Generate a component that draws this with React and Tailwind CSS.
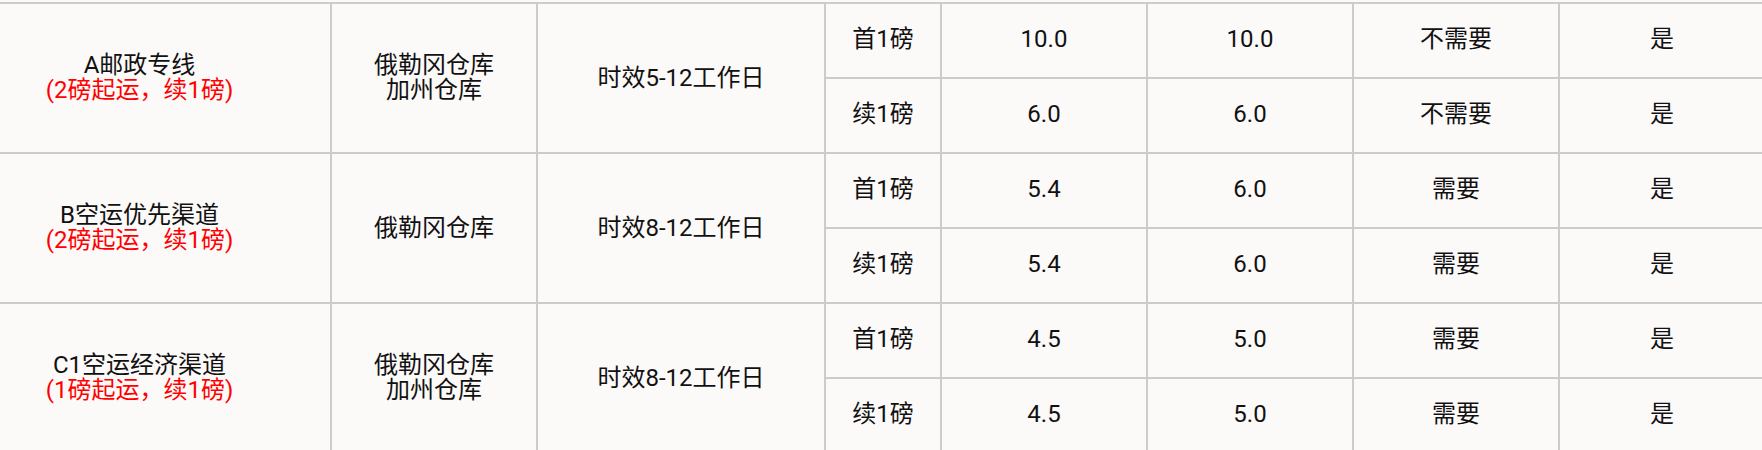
const GROUPS = [
  {
    name: "A邮政专线",
    note: "(2磅起运，续1磅)",
    store: ["俄勒冈仓库", "加州仓库"],
    time: "时效5-12工作日",
    rows: [
      ["首1磅", "10.0", "10.0", "不需要", "是"],
      ["续1磅", "6.0", "6.0", "不需要", "是"],
    ],
  },
  {
    name: "B空运优先渠道",
    note: "(2磅起运，续1磅)",
    store: ["俄勒冈仓库"],
    time: "时效8-12工作日",
    rows: [
      ["首1磅", "5.4", "6.0", "需要", "是"],
      ["续1磅", "5.4", "6.0", "需要", "是"],
    ],
  },
  {
    name: "C1空运经济渠道",
    note: "(1磅起运，续1磅)",
    store: ["俄勒冈仓库", "加州仓库"],
    time: "时效8-12工作日",
    rows: [
      ["首1磅", "4.5", "5.0", "需要", "是"],
      ["续1磅", "4.5", "5.0", "需要", "是"],
    ],
  },
];

const cell = "flex flex-col items-center justify-center bg-[#fcf9f9] text-center";

export default function App() {
  return (
    <div className="h-[450px] w-[1762px] overflow-hidden bg-[#fcf9f9]">
      <div
        className="mt-[2px] -ml-[53px] grid w-max auto-rows-[73px] grid-cols-[381px_204px_286px_114px_204px_204px_204px_204px] gap-[2px] bg-[#cccccc] p-[2px] text-[24px] leading-[25px] text-[#111]"
        style={{ fontFamily: 'Roboto, "Noto Sans CJK SC", sans-serif' }}
      >
        {GROUPS.map((g) => (
          <>
            <div key={g.name} className={`${cell} row-span-2`}>
              <span>{g.name}</span>
              <span className="text-[#ff0000]">{g.note}</span>
            </div>
            <div className={`${cell} row-span-2`}>
              {g.store.map((s) => (
                <span key={s}>{s}</span>
              ))}
            </div>
            <div className={`${cell} row-span-2`}>{g.time}</div>
            {g.rows.map((r) =>
              r.map((v, i) => (
                <div key={r[0] + i} className={`${cell} pb-[3px]`}>
                  {v}
                </div>
              ))
            )}
          </>
        ))}
      </div>
    </div>
  );
}
